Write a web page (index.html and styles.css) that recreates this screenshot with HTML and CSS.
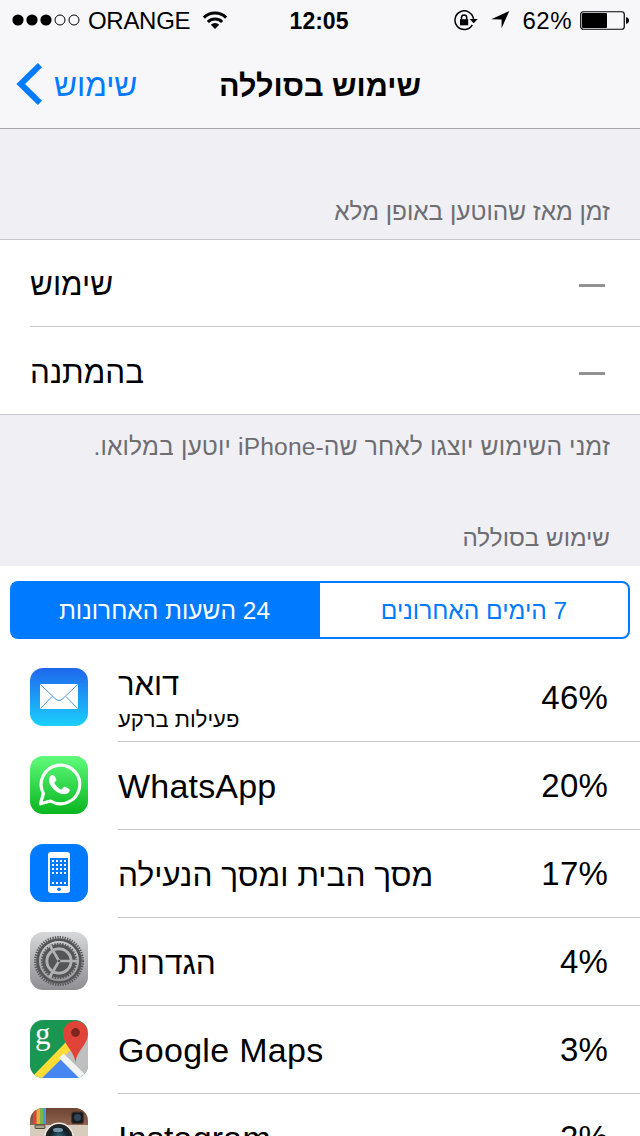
FILE: index.html
```
<!DOCTYPE html>
<html lang="he">
<head>
<meta charset="utf-8">
<title>שימוש בסוללה</title>
<link rel="stylesheet" href="styles.css">
</head>
<body>
  <div class="screen">
    <div class="status">
      <div class="status_left">
        <svg class="signal" width="68" height="12" viewBox="0 0 68 12">
          <circle cx="6" cy="6" r="5.6"/>
          <circle cx="20" cy="6" r="5.6"/>
          <circle cx="34" cy="6" r="5.6"/>
          <circle class="off" cx="48" cy="6" r="5"/>
          <circle class="off" cx="62" cy="6" r="5"/>
        </svg>
        <span class="carrier">ORANGE</span>
        <svg class="wifi" width="26" height="19" viewBox="0 0 26 19">
          <path class="arc" d="M1.900 6.600a15.800 15.800 0 0 1 22.200 0"/>
          <path class="arc" d="M5.900 11a10.200 10.200 0 0 1 14.200 0"/>
          <path d="M13 18l-4.200-4.300a6 6 0 0 1 8.400 0z"/>
        </svg>
      </div>
      <div class="time">12:05</div>
      <div class="status_right">
        <svg class="lock" width="24" height="21" viewBox="0 0 24 21">
          <path class="ring" d="M18.300 14.900A9.300 9.300 0 1 1 19.500 9"/>
          <path d="M15.700 9h8l-4 4.300z"/>
          <path d="M6 9.200h8.200v6.100H6z"/>
          <path class="shackle" d="M7.500 9.500V7.600a2.600 2.600 0 0 1 5.200 0v1.900"/>
        </svg>
        <svg class="arrow" width="19" height="18" viewBox="0 0 19 18">
          <path d="M18.300 0L10.600 17.300V8.400L.3 8.200z"/>
        </svg>
        <span class="percent">62%</span>
        <svg class="battery" width="49" height="19" viewBox="0 0 49 19">
          <rect class="shell" x=".75" y=".75" width="43.500" height="17.500" rx="2.500"/>
          <rect x="2" y="2" width="25" height="15" rx="1"/>
          <path d="M46 6.300c2 0 3 1.300 3 3.200s-1 3.200-3 3.200z"/>
        </svg>
      </div>
    </div>

    <div class="nav">
      <a class="back">
        <svg width="26" height="42" viewBox="0 0 26 42">
          <path d="M24 2.100L4.700 21l19.300 18.900"/>
        </svg>
        <span>שימוש</span>
      </a>
      <h1>שימוש בסוללה</h1>
    </div>

    <div class="section_head tall" dir="rtl">זמן מאז שהוטען באופן מלא</div>
    <div class="group">
      <div class="cell">
        <span class="label">שימוש</span><span class="dash"></span>
      </div>
      <div class="cell">
        <span class="label">בהמתנה</span><span class="dash"></span>
      </div>
    </div>
    <div class="note" dir="rtl">זמני השימוש יוצגו לאחר שה-iPhone יוטען במלואו.</div>
    <div class="section_head" dir="rtl">שימוש בסוללה</div>

    <div class="apps">
      <div class="segments">
        <div class="segment selected" dir="rtl">24 השעות האחרונות</div>
        <div class="segment" dir="rtl">7 הימים האחרונים</div>
      </div>

      <div class="app">
        <svg class="icon" viewBox="0 0 58 58">
          <defs>
            <linearGradient id="mail" x2="0" y2="1">
              <stop offset="0" stop-color="#1f66ec"/>
              <stop offset="1" stop-color="#1bd0fd"/>
            </linearGradient>
          </defs>
          <rect width="58" height="58" rx="13" fill="url(#mail)"/>
          <rect x="10" y="16" width="38" height="25" rx="1" fill="#fff"/>
          <path d="M10.500 16.500l14.500 14q4 4 8 0l14.500-14M10.500 40.500L22 28.500M47.500 40.500L36 28.500"
              fill="none" stroke="#4795dc"/>
        </svg>
        <div class="app_body">
          <div class="app_text">
            <div class="he mail">דואר</div>
            <div class="sub">פעילות ברקע</div>
          </div>
          <div class="value">46%</div>
        </div>
      </div>

      <div class="app">
        <svg class="icon" viewBox="0 0 58 58">
          <defs>
            <linearGradient id="whatsapp" x2="0" y2="1">
              <stop offset="0" stop-color="#60fb7c"/>
              <stop offset="1" stop-color="#08b51f"/>
            </linearGradient>
          </defs>
          <rect width="58" height="58" rx="13" fill="url(#whatsapp)"/>
          <path d="M10.500 47.800l2.900-10.300A19.300 19.300 0 1 1 20.500 45z"
              fill="none" stroke="#fff" stroke-width="3.200" stroke-linejoin="round"/>
          <path d="M22.500 18.900c-1.400 0-3.500 2.100-3.500 5 0 6.500 8.300 14.300 15.300 14.300 3 0 5.500-1.900 5.500-4.200 0-1.300-4.300-3.300-5.400-3.300-1.200 0-1.900 2.800-3 2.800-1.700 0-7-5-7-6.700 0-1 2-1.700 2-2.800 0-1-1.700-5.100-3.900-5.100z"
              fill="#fff"/>
        </svg>
        <div class="app_body">
          <div class="name">WhatsApp</div>
          <div class="value">20%</div>
        </div>
      </div>

      <div class="app">
        <svg class="icon" viewBox="0 0 58 58">
          <rect width="58" height="58" rx="13" fill="#007aff"/>
          <rect x="18" y="8" width="22" height="41" rx="3" fill="#fff"/>
          <rect x="20" y="14" width="18" height="28" fill="#007aff"/>
          <path d="M22 17h14M22 21h14M22 25h14M22 29h14M22 39h14"
              stroke="#fff" stroke-width="2" stroke-dasharray="2 2"/>
          <circle cx="29" cy="45.300" r="1.800" fill="#007aff"/>
        </svg>
        <div class="app_body">
          <div class="he">מסך הבית ומסך הנעילה</div>
          <div class="value">17%</div>
        </div>
      </div>

      <div class="app">
        <svg class="icon" viewBox="0 0 58 58">
          <defs>
            <linearGradient id="settings" x2="0" y2="1">
              <stop offset="0" stop-color="#d7d8da"/>
              <stop offset="1" stop-color="#8e8e93"/>
            </linearGradient>
          </defs>
          <rect width="58" height="58" rx="13" fill="url(#settings)"/>
          <g fill="none" stroke="#555557">
            <circle cx="29" cy="29" r="23.800" stroke-width="2.400" stroke-dasharray="1.350 1.142"/>
            <circle cx="29" cy="29" r="21.400" stroke-width="2.800"/>
            <circle cx="29" cy="29" r="17.300" stroke-width="1.800" stroke-dasharray="1.500 1.218"/>
            <circle cx="29" cy="29" r="15.100" stroke-width="3.200"/>
          </g>
          <circle cx="29" cy="29" r="12" fill="#555557" stroke="#b0b1b3" stroke-width="2.600"/>
          <path d="M29 29h19M29 29L19.500 12.500M29 29l-9.500 16.500" stroke="#b0b1b3" stroke-width="2.600"/>
          <circle cx="29" cy="29" r="1.300" fill="#555557"/>
        </svg>
        <div class="app_body">
          <div class="he">הגדרות</div>
          <div class="value">4%</div>
        </div>
      </div>

      <div class="app">
        <svg class="icon" viewBox="0 0 58 58">
          <defs>
            <clipPath id="round"><rect width="58" height="58" rx="13"/></clipPath>
          </defs>
          <g clip-path="url(#round)">
            <rect width="58" height="58" fill="#199652"/>
            <path d="M30 36L58 8v50z" fill="#bfbfc1"/>
            <path d="M6 62l23.500-24.500L54 62z" fill="#4586f1"/>
            <path d="M0 59l37-38 4.500 8L8 62z" fill="#fddc35"/>
            <path d="M29 38l4.500-4.500L62 61l-5 5z" fill="#f2f2f3"/>
            <path d="M45.500 43.500C45 31 33 25 33 13.500a12.500 12.500 0 0 1 25 0C58 25 46 31 45.500 43.500z" fill="#e04338"/>
            <circle cx="45.500" cy="12.500" r="4.400" fill="#7c2420"/>
          </g>
          <text class="g" x="5" y="24">g</text>
        </svg>
        <div class="app_body">
          <div class="name maps">Google Maps</div>
          <div class="value">3%</div>
        </div>
      </div>

      <div class="app">
        <svg class="icon" viewBox="0 0 58 58">
          <defs>
            <linearGradient id="leather" x2="0" y2="1">
              <stop offset="0" stop-color="#6d4431"/>
              <stop offset="1" stop-color="#906450"/>
            </linearGradient>
            <radialGradient id="lens">
              <stop offset="0" stop-color="#3c7385"/>
              <stop offset=".55" stop-color="#1b3946"/>
              <stop offset="1" stop-color="#15191d"/>
            </radialGradient>
          </defs>
          <g clip-path="url(#round)">
            <rect width="58" height="58" fill="#d8cdbd"/>
            <rect width="58" height="17" fill="url(#leather)"/>
            <path d="M3 0h3.500v16H3z" fill="#d8473f"/>
            <path d="M6.500 0H10v16H6.500z" fill="#f0a73b"/>
            <path d="M10 0h3v16h-3z" fill="#75b84c"/>
            <path d="M13 0h3v16h-3z" fill="#459ed8"/>
            <rect x="5" y="17" width="10" height="3.500" rx="1" fill="#aea08d" stroke="#54463c"/>
            <rect x="41.500" y="4" width="12" height="11.500" rx="2" fill="#171b20" stroke="#51362b"/>
            <circle cx="47.500" cy="9.500" r="3.500" fill="#324457"/>
            <circle cx="29" cy="29.500" r="14.200" fill="#20252a" stroke="#eee9df" stroke-width="1.500"/>
            <circle cx="29" cy="29.500" r="10.500" fill="url(#lens)"/>
            <ellipse cx="28" cy="22" rx="5" ry="2.200" fill="#7195a6"/>
          </g>
        </svg>
        <div class="app_body">
          <div class="name">Instagram</div>
          <div class="value">2%</div>
        </div>
      </div>
    </div>
  </div>
</body>
</html>
```
FILE: styles.css
```
body {
  margin: 0;
  background-color: #efeff4;
  color: #000;
  font-family: "Liberation Sans", sans-serif;
}
.screen {
  width: 640px;
  height: 1136px;
  overflow: hidden;
}
.status {
  display: flex;
  align-items: center;
  height: 40px;
  padding: 0 11px 0 12px;
  background-color: #f7f7f9;
  font-size: 24px;
}
.status_left, .status_right {
  display: flex;
  align-items: center;
  flex: 1;
}
.status_right { justify-content: flex-end; }
.signal .off, .battery .shell {
  fill: none;
  stroke: #000;
}
.battery .shell { stroke-width: 1.2; }
.carrier {
  margin: 2px 13px 0 8px;
  letter-spacing: -.3px;
}
.wifi .arc {
  fill: none;
  stroke: #000;
  stroke-width: 3;
}
.wifi { margin-left: -1px; }
.time {
  margin: 2px 3px 0 0;
  font-size: 23px;
  font-weight: bold;
}
.lock .ring, .lock .shackle {
  fill: none;
  stroke: #000;
  stroke-width: 1.5;
}
.arrow { margin: 0 12px 0 13px; }
.percent {
  margin: 2px 8px 0 0;
  letter-spacing: .5px;
}

.nav {
  display: grid;
  grid-template-columns: 1fr auto 1fr;
  align-items: center;
  height: 88px;
  background-color: #f7f7f9;
  border-bottom: 1px solid #a7a7ab;
}
.back {
  display: flex;
  align-items: center;
  padding-left: 16px;
  color: #007aff;
  font-size: 31.5px;
}
.back svg {
  margin-right: 12px;
  fill: none;
  stroke: #007aff;
  stroke-width: 6;
}
.back span { margin-top: 2px; }
h1 {
  margin: 2px 0 0;
  font-size: 30.5px;
  line-height: 40px;
}

.section_head {
  box-sizing: border-box;
  height: 63px;
  padding: 19px 30px 0;
  color: #6d6d72;
  font-size: 24.2px;
  line-height: 32px;
}
.section_head.tall {
  height: 110px;
  padding-top: 67px;
  font-size: 24.4px;
}
.group {
  background-color: #fff;
  border-top: 1px solid #c8c7cc;
  border-bottom: 1px solid #c8c7cc;
}
.cell {
  display: flex;
  box-sizing: border-box;
  align-items: center;
  justify-content: space-between;
  height: 86px;
  margin-left: 30px;
  padding-right: 35px;
}
.cell + .cell {
  height: 88px;
  border-top: 1px solid #c8c7cc;
}
.label {
  margin-top: 4px;
  font-size: 31.4px;
}
.dash {
  width: 26px;
  height: 3px;
  margin-top: 5px;
  background-color: #929294;
}
.note {
  box-sizing: border-box;
  height: 88px;
  padding: 16px 30px 0;
  color: #6d6d72;
  font-size: 24.6px;
  letter-spacing: .14px;
  line-height: 32px;
}

.apps {
  padding-top: 15px;
  background-color: #fff;
}
.segments {
  display: flex;
  box-sizing: border-box;
  height: 58px;
  margin: 0 10px 15px;
  border: 2px solid #007aff;
  border-radius: 8px;
  color: #007aff;
  font-size: 24.5px;
}
.segment {
  display: flex;
  box-sizing: border-box;
  width: 50%;
  padding-top: 2px;
  align-items: center;
  justify-content: center;
}
.segment.selected {
  padding-right: 3px;
  background-color: #007aff;
  color: #fff;
}
.app {
  display: flex;
  height: 88px;
  padding-left: 30px;
}
.icon {
  flex: none;
  width: 58px;
  height: 58px;
  margin: 14px 30px 0 0;
}
.icon .g {
  fill: #fff;
  font-family: "Liberation Serif", serif;
  font-size: 31px;
}
.app_body {
  display: flex;
  flex: 1;
  box-sizing: border-box;
  align-items: center;
  justify-content: space-between;
  padding-right: 32px;
  border-bottom: 1px solid #c8c7cc;
}
.name {
  margin-top: 2px;
  font-size: 34px;
  letter-spacing: .2px;
}
.maps { letter-spacing: .3px; }
.he {
  margin-top: 4px;
  font-size: 31.6px;
}
.app_text { margin-top: 4px; }
.mail {
  font-size: 31px;
  line-height: 36px;
}
.sub {
  font-size: 22px;
  line-height: 33px;
}
.value {
  font-size: 33px;
  letter-spacing: .2px;
}
```
